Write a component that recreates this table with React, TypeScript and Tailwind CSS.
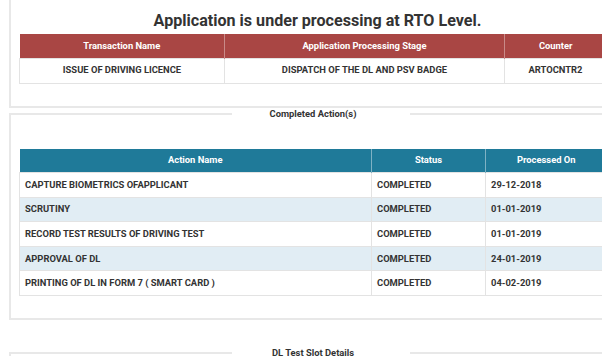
const stageRows = [
  { name: "ISSUE OF DRIVING LICENCE", stage: "DISPATCH OF THE DL AND PSV BADGE", counter: "ARTOCNTR2" },
];

const actions = [
  { name: "CAPTURE BIOMETRICS OFAPPLICANT", status: "COMPLETED", date: "29-12-2018" },
  { name: "SCRUTINY", status: "COMPLETED", date: "01-01-2019" },
  { name: "RECORD TEST RESULTS OF DRIVING TEST", status: "COMPLETED", date: "01-01-2019" },
  { name: "APPROVAL OF DL", status: "COMPLETED", date: "24-01-2019" },
  { name: "PRINTING OF DL IN FORM 7 ( SMART CARD )", status: "COMPLETED", date: "04-02-2019" },
];

// panel title that breaks the top border, like a fieldset legend
function LegendRow({ text }: { text: string }) {
  return (
    <div className="flex items-center h-[12px]">
      <div className="w-[223px] h-[2px] bg-[#e8e8e8]" />
      <div className="w-[178px] pr-[16px] text-center text-[9.4px] leading-[12px] font-bold text-[#333]">
        {text}
      </div>
      <div className="flex-1 h-[2px] bg-[#e8e8e8]" />
    </div>
  );
}

export default function App() {
  return (
    <div
      className="w-[602px] h-[356px] overflow-hidden bg-white"
      style={{ fontFamily: "Roboto, 'Liberation Sans', sans-serif" }}
    >
      <div className="w-[626px] pl-[9px]">
        {/* processing status */}
        <div className="border-2 border-t-0 border-[#e8e8e8] px-[8px] pt-[7px] pb-[22px]">
          <h2 className="text-center text-[16.1px] leading-[27px] font-bold text-[#333]">
            Application is under processing at RTO Level.
          </h2>
          <table className="w-[588px] border-collapse table-fixed">
            <thead>
              <tr className="bg-[#a94644] text-white text-[9.4px] font-bold h-[24px]">
                <th className="w-[205px] border-r border-[#c98a88]">Transaction Name</th>
                <th className="w-[280px] border-r border-[#c98a88]">Application Processing Stage</th>
                <th>Counter</th>
              </tr>
            </thead>
            <tbody>
              {stageRows.map((r) => (
                <tr key={r.name} className="h-[25px] text-[9.4px] font-bold text-[#333] text-center">
                  <td className="border border-[#e3e3e3]">{r.name}</td>
                  <td className="border border-[#e3e3e3]">{r.stage}</td>
                  <td className="border border-[#e3e3e3]">{r.counter}</td>
                </tr>
              ))}
            </tbody>
          </table>
        </div>

        {/* completed actions */}
        <div>
          <LegendRow text="Completed Action(s)" />
          <div className="-mt-[7px] border-x-2 border-b-2 border-[#e8e8e8] px-[8px] pt-[36px] pb-[22px]">
            <table className="w-[588px] border-collapse table-fixed">
              <thead>
                <tr className="bg-[#1f7a99] text-white text-[9.4px] font-bold h-[24px]">
                  <th className="w-[352px] border-r border-[#7fb2c4]">Action Name</th>
                  <th className="w-[114px] border-r border-[#7fb2c4]">Status</th>
                  <th>Processed On</th>
                </tr>
              </thead>
              <tbody>
                {actions.map((a, i) => (
                  <tr
                    key={a.name}
                    className={
                      "h-[24.6px] text-[9.4px] font-bold text-[#333] " +
                      (i % 2 === 1 ? "bg-[#e1edf4]" : "bg-white")
                    }
                  >
                    <td className="border border-[#e3e3e3] px-[5px]">{a.name}</td>
                    <td className="border border-[#e3e3e3] px-[5px]">{a.status}</td>
                    <td className="border border-[#e3e3e3] px-[5px]">{a.date}</td>
                  </tr>
                ))}
              </tbody>
            </table>
          </div>
        </div>

        {/* test slot */}
        <div className="mt-[27px]">
          <LegendRow text="DL Test Slot Details" />
          <div className="-mt-[7px] h-[60px] border-x-2 border-[#e8e8e8]" />
        </div>
      </div>
    </div>
  );
}
